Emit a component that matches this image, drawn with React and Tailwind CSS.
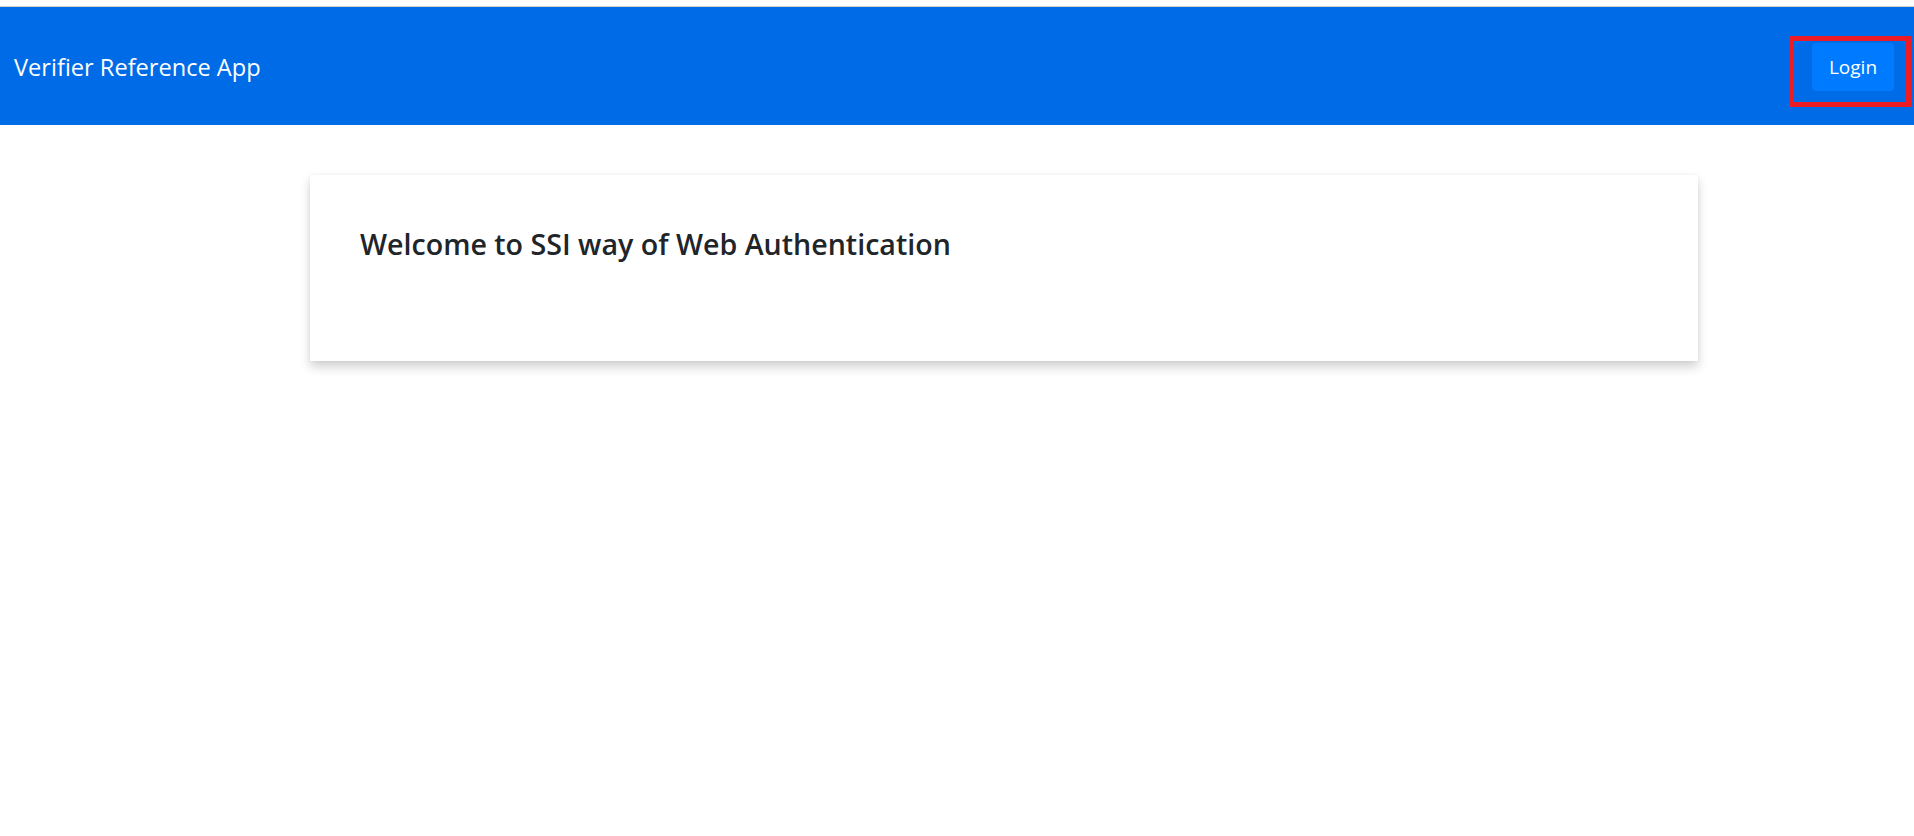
export default function App() {
  return (
    <div className="min-h-[836px] bg-white" style={{ fontFamily: '"Open Sans", "Noto Sans", sans-serif' }}>
      <div className="h-[6px] bg-white"></div>
      <div className="h-[1px] bg-[#d0d0d0]"></div>
      <header className="relative flex h-[118px] items-center justify-between bg-[#006be6] pl-[14px] pr-[20px]">
        <span className="mt-[4px] text-[23.6px] leading-none text-white">Verifier Reference App</span>
        <button className="mt-[2px] h-[48px] w-[82px] rounded-[4px] bg-[#007bff] text-[19px] leading-none text-white">Login</button>
        <div className="pointer-events-none absolute left-[1789px] top-[29px] h-[71px] w-[122px] border-[5px] border-[#ed1c24]"></div>
      </header>
      <main className="pt-[50px]">
        <div className="ml-[310px] h-[186px] w-[1388px] bg-white px-[50px] pt-[52px] shadow-[0_6px_10px_rgba(0,0,0,0.18),0_0_4px_rgba(0,0,0,0.05)]">
          <h3 className="text-[28.6px] font-semibold leading-[1.2] text-[#212529]">Welcome to SSI way of Web Authentication</h3>
        </div>
      </main>
    </div>
  );
}
